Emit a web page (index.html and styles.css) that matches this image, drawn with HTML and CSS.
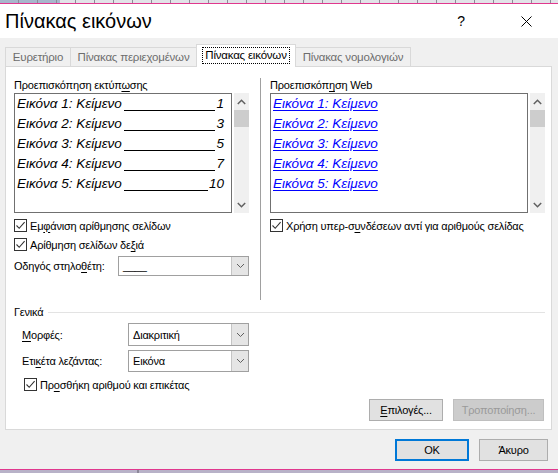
FILE: index.html
```html
<!DOCTYPE html>
<html lang="el">
<head>
<meta charset="utf-8">
<title>Πίνακας εικόνων</title>
<link rel="stylesheet" href="styles.css">
</head>
<body>
<div class="ruler"></div>
<div class="dialog">
  <div class="titlebar">
    <div class="title">Πίνακας εικόνων</div>
    <div class="help">?</div>
    <div class="close">
      <svg width="11" height="11" viewBox="0 0 11 11"><path d="M0.5 0.5 L10.5 10.5 M10.5 0.5 L0.5 10.5" stroke="#000" stroke-width="1" fill="none"/></svg>
    </div>
  </div>
  <div class="content">
    <div class="tabs">
      <div class="tab tab-index">Ευρετήριο</div>
      <div class="tab tab-toc">Πίνακας περιεχομένων</div>
      <div class="tab tab-figures active"><span class="focus">Πίνακας εικόνων</span></div>
      <div class="tab tab-authorities">Πίνακας νομολογιών</div>
    </div>
    <div class="panel">
      <div class="columns">
        <div class="col col-left">
          <div class="label">Προεπισκόπηση εκτύπ<u>ω</u>σης</div>
          <div class="preview">
            <div class="box print-box">
              <div class="entry"><span class="name">Εικόνα 1: Κείμενο</span><span class="leader"></span><span class="num">1</span></div>
              <div class="entry"><span class="name">Εικόνα 2: Κείμενο</span><span class="leader"></span><span class="num">3</span></div>
              <div class="entry"><span class="name">Εικόνα 3: Κείμενο</span><span class="leader"></span><span class="num">5</span></div>
              <div class="entry"><span class="name">Εικόνα 4: Κείμενο</span><span class="leader"></span><span class="num">7</span></div>
              <div class="entry"><span class="name">Εικόνα 5: Κείμενο</span><span class="leader"></span><span class="num">10</span></div>
            </div>
            <div class="scroll">
              <div class="arrow"><svg width="9" height="6" viewBox="0 0 9 6"><path d="M0.8 5 L4.5 1.3 L8.2 5" stroke="#606060" stroke-width="1.5" fill="none"/></svg></div>
              <div class="thumb"></div>
              <div class="track"></div>
              <div class="arrow"><svg width="9" height="6" viewBox="0 0 9 6"><path d="M0.8 1 L4.5 4.7 L8.2 1" stroke="#606060" stroke-width="1.5" fill="none"/></svg></div>
            </div>
          </div>
          <div class="check check-first"><span class="cb"><svg width="11" height="11" viewBox="0 0 11 11"><path d="M1.5 5.5 L4.2 8.3 L9.6 2.2" stroke="#333" stroke-width="1.1" fill="none"/></svg></span><span>Εμ<u>φ</u>άνιση αρίθμησης σελίδων</span></div>
          <div class="check"><span class="cb"><svg width="11" height="11" viewBox="0 0 11 11"><path d="M1.5 5.5 L4.2 8.3 L9.6 2.2" stroke="#333" stroke-width="1.1" fill="none"/></svg></span><span>Αρίθμηση σελίδων δε<u>ξ</u>ιά</span></div>
          <div class="field field-leader">
            <span class="field-label">Οδηγός στηλο<u>θ</u>έτη:</span>
            <div class="combo combo-leader"><span class="combo-value">____</span><span class="drop"><svg width="9" height="6" viewBox="0 0 9 6"><path d="M1 1 L4.5 4.5 L8 1" stroke="#606060" stroke-width="1" fill="none"/></svg></span></div>
          </div>
        </div>
        <div class="sep"></div>
        <div class="col col-right">
          <div class="label">Προεπισκόπ<u>η</u>ση Web</div>
          <div class="preview">
            <div class="box web-box">
              <div class="link">Εικόνα 1: Κείμενο</div>
              <div class="link">Εικόνα 2: Κείμενο</div>
              <div class="link">Εικόνα 3: Κείμενο</div>
              <div class="link">Εικόνα 4: Κείμενο</div>
              <div class="link">Εικόνα 5: Κείμενο</div>
            </div>
            <div class="scroll">
              <div class="arrow"><svg width="9" height="6" viewBox="0 0 9 6"><path d="M0.8 5 L4.5 1.3 L8.2 5" stroke="#606060" stroke-width="1.5" fill="none"/></svg></div>
              <div class="thumb"></div>
              <div class="track"></div>
              <div class="arrow"><svg width="9" height="6" viewBox="0 0 9 6"><path d="M0.8 1 L4.5 4.7 L8.2 1" stroke="#606060" stroke-width="1.5" fill="none"/></svg></div>
            </div>
          </div>
          <div class="check check-first"><span class="cb"><svg width="11" height="11" viewBox="0 0 11 11"><path d="M1.5 5.5 L4.2 8.3 L9.6 2.2" stroke="#333" stroke-width="1.1" fill="none"/></svg></span><span>Χρήση υπερ-σ<u>υ</u>νδέσεων αντί για αριθμούς σελίδας</span></div>
        </div>
      </div>
      <div class="general">
        <div class="group-title"><span>Γενικά</span><span class="group-line"></span></div>
        <div class="form-row row-formats">
          <span class="form-label"><u>Μ</u>ορφές:</span>
          <div class="combo combo-form"><span class="combo-value">Διακριτική</span><span class="drop"><svg width="9" height="6" viewBox="0 0 9 6"><path d="M1 1 L4.5 4.5 L8 1" stroke="#606060" stroke-width="1" fill="none"/></svg></span></div>
        </div>
        <div class="form-row row-caption">
          <span class="form-label">Ετι<u>κ</u>έτα λεζάντας:</span>
          <div class="combo combo-form"><span class="combo-value">Εικόνα</span><span class="drop"><svg width="9" height="6" viewBox="0 0 9 6"><path d="M1 1 L4.5 4.5 L8 1" stroke="#606060" stroke-width="1" fill="none"/></svg></span></div>
        </div>
        <div class="check check-general"><span class="cb"><svg width="11" height="11" viewBox="0 0 11 11"><path d="M1.5 5.5 L4.2 8.3 L9.6 2.2" stroke="#333" stroke-width="1.1" fill="none"/></svg></span><span>Πρ<u>ο</u>σθήκη αριθμού και επικέτας</span></div>
        <div class="panel-buttons">
          <button class="btn btn-options"><u>Ε</u>πιλογές...</button>
          <button class="btn btn-modify" disabled>Τροποποίηση...</button>
        </div>
      </div>
    </div>
    <div class="footer">
      <button class="btn btn-ok">OK</button>
      <button class="btn btn-cancel">Άκυρο</button>
    </div>
  </div>
</div>
<div class="taskbar"></div>
</body>
</html>
```
FILE: styles.css
```css
* { box-sizing: border-box; }
html, body { margin: 0; padding: 0; }
body {
  width: 558px;
  height: 473px;
  overflow: hidden;
  background: #f0f0f0;
  font-family: "Liberation Sans", Arial, sans-serif;
  font-size: 11px;
  letter-spacing: -0.2px;
  color: #000;
}
u { text-decoration: underline; text-underline-offset: 2px; }

.ruler {
  height: 3px;
  background:
    repeating-linear-gradient(to right, transparent 0 18px, #8c8c96 18px 19px),
    linear-gradient(to right, #a8b6cc 0 60px, #e2e3e8 60px);
}
.dialog {
  border-top: 1px solid #e0388e;
  border-bottom: 1px solid #e0388e;
}
.titlebar {
  height: 34px;
  background: #fff;
  display: flex;
  align-items: center;
}
.title {
  padding-left: 5px;
  font-size: 20px;
  letter-spacing: 0;
  line-height: 24px;
  flex: 1;
}
.help {
  width: 30px;
  text-align: center;
  font-size: 14px;
  margin-right: 38px;
}
.close {
  width: 24px;
  display: flex;
  justify-content: center;
  margin-right: 20px;
}
.content {
  height: 431px;
  padding-top: 6px;
  display: flex;
  flex-direction: column;
}

/* tabs */
.tabs {
  display: flex;
  align-items: flex-end;
  height: 22px;
  padding-left: 5px;
}
.tab {
  height: 19px;
  border: 1px solid #d9d9d9;
  border-bottom: none;
  background: #f0f0f0;
  color: #6d6d6d;
  font-size: 11.5px;
  line-height: 18px;
  text-align: center;
  white-space: nowrap;
  margin-left: -1px;
}
.tab-index { width: 66px; margin-left: 0; }
.tab-toc { width: 127px; }
.tab-figures { width: 100px; }
.tab-authorities { width: 116px; }
.tab.active {
  height: 23px;
  margin-bottom: -1px;
  background: #fff;
  color: #000;
  position: relative;
  z-index: 1;
  padding-top: 2px;
  line-height: 16px;
}
.focus {
  display: inline-block;
  border: 1px dotted #000;
  padding: 0 2px;
  line-height: 15px;
}

/* panel */
.panel {
  margin-left: 5px;
  width: 547px;
  height: 364px;
  border: 1px solid #d9d9d9;
  background: #fff;
  padding: 11px 6px 0 8px;
}
.columns {
  display: flex;
  height: 222px;
}
.col-left { width: 235px; }
.col-right { width: 275px; }
.sep {
  width: 1px;
  background: #a0a0a0;
  margin: 0 9px 0 11px;
}
.label {
  height: 15px;
  line-height: 15px;
  white-space: nowrap;
}
.preview {
  display: flex;
  height: 120px;
  gap: 2px;
}
.box {
  flex: 1;
  border: 1px solid #707070;
  overflow: hidden;
  font-style: italic;
  font-size: 13.5px;
  letter-spacing: 0;
}
.print-box { padding: 0 7px 0 2px; }
.entry {
  display: flex;
  align-items: flex-end;
  height: 20px;
}
.entry .name, .entry .num { line-height: 20px; white-space: nowrap; }
.leader {
  flex: 1;
  border-bottom: 1px solid #000;
  margin: 0 1px 3px 2px;
}
.web-box { padding-left: 2px; }
.link {
  height: 20px;
  line-height: 20px;
  color: #0000ff;
  text-decoration: underline;
  text-underline-offset: 2px;
  white-space: nowrap;
}
.scroll {
  width: 15px;
  background: #f0f0f0;
  display: flex;
  flex-direction: column;
}
.arrow {
  height: 17px;
  display: flex;
  align-items: center;
  justify-content: center;
}
.thumb { height: 17px; background: #cdcdcd; }
.track { flex: 1; }

.check {
  display: flex;
  align-items: center;
  height: 13px;
  margin-top: 6px;
  white-space: nowrap;
}
.cb {
  width: 13px;
  height: 13px;
  border: 1px solid #333;
  background: #fff;
  margin-right: 3px;
  display: flex;
  flex: none;
}
.field {
  display: flex;
  align-items: center;
  margin-top: 5px;
}
.field-label { flex: 1; white-space: nowrap; }
.combo {
  display: flex;
  border: 1px solid #a0a0a0;
  background: #fff;
}
.combo-leader { width: 131px; height: 20px; }
.combo-value {
  flex: 1;
  padding-left: 4px;
  display: flex;
  align-items: center;
}
.drop {
  width: 17px;
  background: #e5e5e5;
  border-left: 1px solid #c4c4c4;
  display: flex;
  align-items: center;
  justify-content: center;
}

/* general */
.general { padding-top: 5px; }
.group-title {
  display: flex;
  align-items: center;
  height: 14px;
  gap: 5px;
}
.group-line { flex: 1; height: 1px; background: #e3e3e3; }
.form-row {
  display: flex;
  align-items: center;
  padding-left: 8px;
  margin-top: 4px;
}
.form-label { width: 106px; white-space: nowrap; }
.combo-form { width: 121px; }
.row-formats .combo { height: 23px; }
.row-caption .combo { height: 22px; }
.check-general { padding-left: 10px; margin-top: 6px; }
.panel-buttons {
  display: flex;
  justify-content: flex-end;
  gap: 10px;
  margin-top: 8px;
  padding-right: 1px;
}
.btn {
  font-family: inherit;
  font-size: 11px;
  letter-spacing: -0.2px;
  height: 22px;
  padding: 0;
  background: #e1e1e1;
  border: 1px solid #adadad;
  color: #000;
}
.btn-options { width: 74px; }
.btn-modify {
  width: 91px;
  background: #cccccc;
  border-color: #bfbfbf;
  color: #9a9a9a;
}
.footer {
  display: flex;
  justify-content: flex-end;
  gap: 10px;
  padding: 9px 10px 0 0;
}
.btn-ok {
  width: 74px;
  height: 22px;
  border: 2px solid #0078d7;
}
.btn-cancel { width: 69px; height: 22px; }
.taskbar {
  height: 4px;
  background: linear-gradient(to right, #b8b2c8 0 137px, #8c8898 137px 139px, #b8b2c8 139px);
}
```
